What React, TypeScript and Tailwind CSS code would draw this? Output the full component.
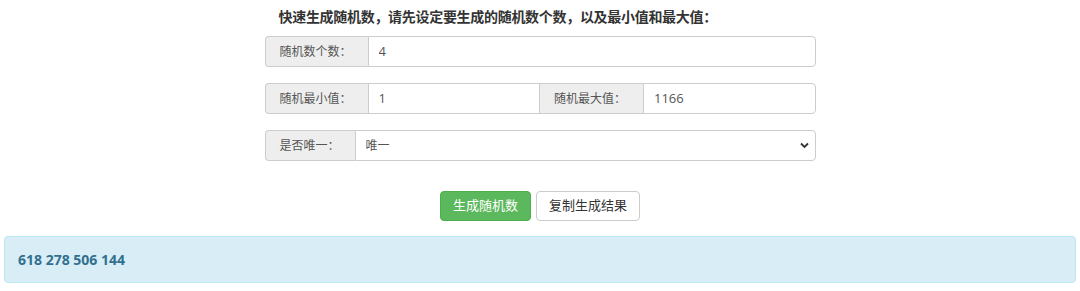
import { useState } from "react";

export default function App() {
  const [count, setCount] = useState("4");
  const [min, setMin] = useState("1");
  const [max, setMax] = useState("1166");
  const [unique, setUnique] = useState("1");

  const addon =
    "flex shrink-0 items-center border border-[#ccc] bg-[#eee] px-[14px] text-[12px] text-[#555]";
  const input =
    "w-0 min-w-0 flex-1 border border-[#ccc] bg-white px-[10px] text-[13px] text-[#555] outline-none";

  return (
    <div className="min-h-[291px] bg-white pt-[7px] font-['Open_Sans','Noto_Sans_CJK_SC',sans-serif] text-[#333]">
      <div className="mx-auto w-[551px]">
        {/* Title */}
        <div className="mb-[9px] pl-[14px] text-[14px] font-bold leading-[20px] tracking-[-0.3px]">
          快速生成随机数，请先设定要生成的随机数个数，以及最小值和最大值：
        </div>

        {/* Count */}
        <div className="mb-[16px] flex h-[31px]">
          <span className={`${addon} w-[103px] rounded-l-[4px] border-r-0`}>随机数个数：</span>
          <input
            className={`${input} rounded-r-[4px]`}
            value={count}
            onChange={(e) => setCount(e.target.value)}
          />
        </div>

        {/* Min / Max */}
        <div className="mb-[16px] flex h-[31px]">
          <div className="flex min-w-0 flex-1">
            <span className={`${addon} w-[103px] rounded-l-[4px] border-r-0`}>随机最小值：</span>
            <input className={input} value={min} onChange={(e) => setMin(e.target.value)} />
          </div>
          <div className="flex min-w-0 flex-1">
            <span className={`${addon} w-[103px] border-x-0`}>随机最大值：</span>
            <input
              className={`${input} rounded-r-[4px]`}
              value={max}
              onChange={(e) => setMax(e.target.value)}
            />
          </div>
        </div>

        {/* Unique */}
        <div className="flex h-[31px]">
          <span className={`${addon} w-[90px] rounded-l-[4px] border-r-0`}>是否唯一：</span>
          <div className="relative flex min-w-0 flex-1">
            <select
              className="w-full appearance-none rounded-r-[4px] border border-[#ccc] bg-white px-[10px] text-[12px] text-[#555] outline-none"
              value={unique}
              onChange={(e) => setUnique(e.target.value)}
            >
              <option value="1">唯一</option>
              <option value="0">可重复</option>
            </select>
            <svg
              className="pointer-events-none absolute right-[7px] top-[12px]"
              width="9"
              height="7"
              viewBox="0 0 9 7"
            >
              <path d="M1 1.5 L4.5 5 L8 1.5" fill="none" stroke="#333" strokeWidth="1.8" />
            </svg>
          </div>
        </div>
      </div>

      {/* Buttons */}
      <div className="mt-[30px] flex justify-center gap-[5px]">
        <button className="h-[30px] rounded-[4px] border border-[#4cae4c] bg-[#5cb85c] px-[12px] text-[13px] text-white">
          生成随机数
        </button>
        <button className="h-[30px] rounded-[4px] border border-[#ccc] bg-white px-[12px] text-[13px] text-[#333]">
          复制生成结果
        </button>
      </div>

      {/* Result */}
      <div className="mx-[4px] mt-[15px] flex h-[47px] items-center rounded-[4px] border border-[#bce8f1] bg-[#d9edf7] px-[13px] text-[14px] font-bold text-[#31708f]">
        618 278 506 144
      </div>
    </div>
  );
}
